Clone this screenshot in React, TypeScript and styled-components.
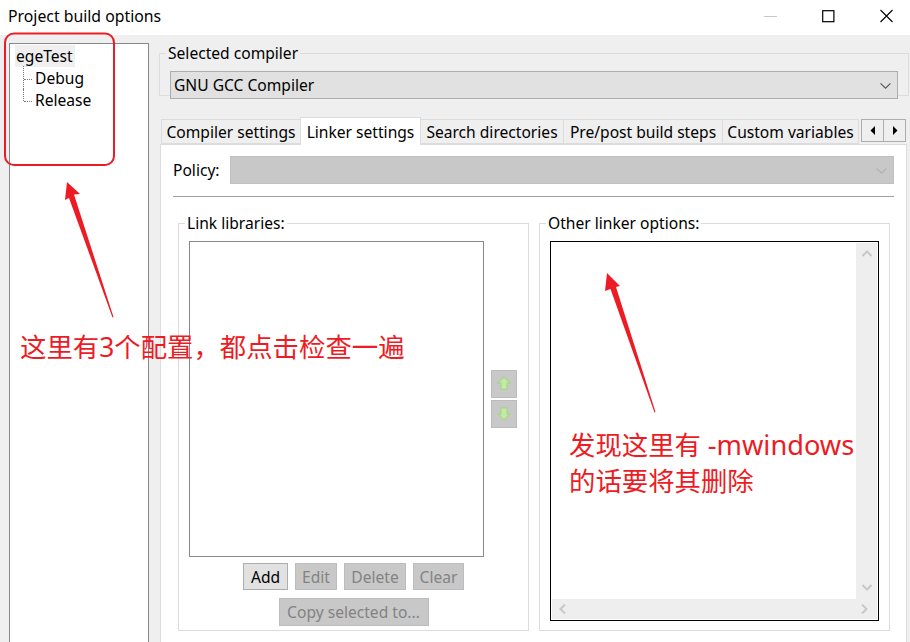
import React from 'react';
import styled, { createGlobalStyle } from 'styled-components';

const GlobalStyle = createGlobalStyle`
  html, body {
    margin: 0;
    padding: 0;
    width: 910px;
    height: 642px;
    overflow: hidden;
    background: #efefef;
    color: #000;
    font-family: "Noto Sans", "Open Sans", sans-serif;
    font-size: 15.6px;
  }
  * { box-sizing: border-box; }
`;

const Page = styled.div`
  position: relative;
  width: 910px;
  height: 642px;
  overflow: hidden;
  display: flex;
  flex-direction: column;
`;

const TitleBar = styled.div`
  height: 35px;
  flex: none;
  background: #fff;
  display: flex;
  align-items: center;
  justify-content: space-between;
  padding: 0 17px 3px 8px;
`;

const Title = styled.div`
  font-size: 15.8px;
`;

const WindowButtons = styled.div`
  display: flex;
  align-items: center;
  gap: 45px;
  height: 14px;

  svg { display: block; }
`;

const Body = styled.div`
  flex: 1;
  min-height: 0;
  display: flex;
  gap: 10px;
  padding: 8px 1px 0 9px;
  background: #efefef;
`;

const TreePanel = styled.div`
  width: 140px;
  height: 620px;
  flex: none;
  background: #fff;
  border: 1px solid #85888f;
  padding: 1px 0 0 5px;
`;

const TreeRoot = styled.div`
  width: fit-content;
  height: 22px;
  line-height: 23px;
  padding: 0 2px 0 1px;
  background: #efefef;
`;

const TreeChild = styled.div<{ $last?: boolean }>`
  position: relative;
  height: 22px;
  line-height: 22px;
  padding-left: 20px;

  &::before {
    content: '';
    position: absolute;
    left: 8px;
    top: ${({ $last }) => ($last ? '0' : '-1px')};
    height: ${({ $last }) => ($last ? '12px' : '23px')};
    border-left: 1px dotted #777;
  }

  &::after {
    content: '';
    position: absolute;
    left: 9px;
    top: 12px;
    width: 8px;
    border-top: 1px dotted #777;
  }
`;

const RightColumn = styled.div`
  flex: 1;
  min-width: 0;
  display: flex;
  flex-direction: column;
`;

const Group = styled.fieldset`
  margin: 0;
  padding: 0;
  min-width: 0;
  border: 1px solid #dcdcdc;
`;

const Legend = styled.legend`
  margin-left: -4px;
  padding: 0 2px;
  line-height: 20px;
  height: 20px;
`;

const CompilerGroup = styled(Group)`
  height: 53px;
  padding: 8px 10px 0 10px;
`;

const Combo = styled.div<{ $disabled?: boolean }>`
  height: 28px;
  display: flex;
  align-items: center;
  justify-content: space-between;
  padding: 0 6px 0 3px;
  background: ${({ $disabled }) => ($disabled ? '#c8c8c8' : '#e1e1e1')};
  border: 1px solid ${({ $disabled }) => ($disabled ? '#c0c0c0' : '#adadad')};
  flex: 1;
  min-width: 0;
`;

const TabsRow = styled.div`
  height: 46px;
  flex: none;
  display: flex;
  align-items: flex-end;
  padding-left: 2px;
  margin-top: 2px;
  position: relative;
`;

const Tab = styled.div<{ $active?: boolean; $w: number }>`
  width: ${({ $w }) => $w}px;
  height: ${({ $active }) => ($active ? '28px' : '25px')};
  flex: none;
  display: flex;
  align-items: center;
  justify-content: center;
  background: ${({ $active }) => ($active ? '#fff' : '#efefef')};
  border: 1px solid #dcdcdc;
  border-bottom: ${({ $active }) => ($active ? 'none' : '1px solid #dcdcdc')};
  margin-right: -1px;
  position: relative;
  z-index: ${({ $active }) => ($active ? 1 : 0)};
  margin-bottom: ${({ $active }) => ($active ? '-1px' : '0')};
`;

const TabScroller = styled.div`
  display: flex;
  margin-left: 3px;
  margin-bottom: 2px;
`;

const TabArrow = styled.div`
  width: 23px;
  height: 23px;
  display: flex;
  align-items: center;
  justify-content: center;
  background: #efefef;
  border: 1px solid #adadad;
  margin-right: -1px;

  svg { display: block; }
`;

const TabPanel = styled.div`
  width: 747px;
  height: 510px;
  flex: none;
  margin-left: 1px;
  background: #fff;
  border: 1px solid #dcdcdc;
  padding: 11px 12px 0 12px;
`;

const PolicyRow = styled.div`
  display: flex;
  align-items: center;
  gap: 10px;
  padding-bottom: 12px;
  border-bottom: 1px solid #a0a0a0;
`;

const Lists = styled.div`
  display: flex;
  gap: 10px;
  margin: 16px 0 0 5px;
`;

const ListGroup = styled(Group)`
  width: 351px;
  height: 418px;
  padding: 8px 10px 0;
  background: #fff;
`;

const LibRow = styled.div`
  display: flex;
  gap: 7px;
  align-items: center;
`;

const ListBox = styled.div`
  width: 295px;
  height: 316px;
  background: #fff;
  border: 1px solid #85888f;
`;

const MoveButtons = styled.div`
  display: flex;
  flex-direction: column;
  gap: 2px;
`;

const MoveButton = styled.div`
  width: 26px;
  height: 28px;
  display: flex;
  align-items: center;
  justify-content: center;
  background: #c8c8c8;
  border: 1px solid #bcbcbc;

  svg { display: block; filter: blur(0.5px); }
`;

const ButtonRow = styled.div`
  display: flex;
  justify-content: center;
  gap: 7px;
  margin-top: 6px;
`;

const CopyRow = styled(ButtonRow)`
  margin-top: 8px;
`;

const Button = styled.div<{ $disabled?: boolean; $w: number; $h?: number }>`
  width: ${({ $w }) => $w}px;
  height: ${({ $h }) => $h ?? 27}px;
  display: flex;
  align-items: center;
  justify-content: center;
  background: ${({ $disabled }) => ($disabled ? '#c8c8c8' : '#e1e1e1')};
  color: ${({ $disabled }) => ($disabled ? '#838383' : '#000')};
  border: 1px solid ${({ $disabled }) => ($disabled ? '#bcbcbc' : '#adadad')};
`;

const OptionsBox = styled.div`
  width: 329px;
  height: 380px;
  background: #fff;
  border: 1px solid #000;
  padding: 1px;
  display: grid;
  grid-template-columns: 1fr 21px;
  grid-template-rows: 1fr 20px;
`;

const ScrollTrack = styled.div<{ $vertical?: boolean }>`
  background: #eeeeee;
  display: flex;
  flex-direction: ${({ $vertical }) => ($vertical ? 'column' : 'row')};
  align-items: center;
  justify-content: space-between;
  padding: ${({ $vertical }) => ($vertical ? '6px 0 7px' : '0 8px 0 6px')};
  grid-column: ${({ $vertical }) => ($vertical ? '2' : '1 / 3')};
  grid-row: ${({ $vertical }) => ($vertical ? '1' : '2')};

  svg { display: block; }
`;

const Overlay = styled.svg`
  position: absolute;
  left: 0;
  top: 0;
  pointer-events: none;
`;

const Callout = styled.div<{ $x: number; $y: number }>`
  position: absolute;
  left: ${({ $x }) => $x}px;
  top: ${({ $y }) => $y}px;
  color: #ed1c24;
  font-family: "Noto Sans", "Noto Sans CJK SC", sans-serif;
  font-size: 26.4px;
  line-height: 36px;
  white-space: nowrap;
`;

const CalloutLatin = styled.span`
  font-size: 27.2px;
`;

const Chevron = ({ dir, color, size = 10, weight = 1 }: { dir: 'up' | 'down' | 'left' | 'right'; color: string; size?: number; weight?: number }) => {
  const rot = { up: 180, down: 0, left: 90, right: -90 }[dir];
  return (
    <svg width={size} height={size} viewBox="0 0 10 10">
      <path d="M0.5 3 L5 7.5 L9.5 3" fill="none" stroke={color} strokeWidth={weight} transform={`rotate(${rot} 5 5)`} />
    </svg>
  );
};

const MoveArrow = ({ down }: { down?: boolean }) => (
  <svg width="14" height="16" viewBox="0 0 16 18">
    <path
      d="M8 1 L15 8 L11.5 8 L11.5 15 L4.5 15 L4.5 8 L1 8 Z"
      fill="#c4e8a6"
      stroke="#a9d58d"
      strokeWidth="1.5"
      transform={down ? 'rotate(180 8 8.5)' : undefined}
    />
  </svg>
);

const App: React.FC = () => {
  return (
    <Page>
      <GlobalStyle />
      <TitleBar>
        <Title>Project build options</Title>
        <WindowButtons>
          <svg width="13" height="14" viewBox="0 0 13 14">
            <path d="M0 7.5 H13" stroke="#c8c8c8" strokeWidth="1" />
          </svg>
          <svg width="13" height="14" viewBox="0 0 13 14">
            <rect x="0.7" y="1.7" width="11.2" height="11" fill="none" stroke="#000" strokeWidth="1.2" />
          </svg>
          <svg width="13" height="14" viewBox="0 0 13 14">
            <path d="M0.5 1 L12.5 13 M12.5 1 L0.5 13" stroke="#000" strokeWidth="1.1" />
          </svg>
        </WindowButtons>
      </TitleBar>
      <Body>
        <TreePanel>
          <TreeRoot>egeTest</TreeRoot>
          <TreeChild>Debug</TreeChild>
          <TreeChild $last>Release</TreeChild>
        </TreePanel>
        <RightColumn>
          <CompilerGroup>
            <Legend>Selected compiler</Legend>
            <Combo>
              GNU GCC Compiler
              <Chevron dir="down" color="#555" size={11} />
            </Combo>
          </CompilerGroup>
          <TabsRow>
            <Tab $w={140}>Compiler settings</Tab>
            <Tab $active $w={121}>Linker settings</Tab>
            <Tab $w={144}>Search directories</Tab>
            <Tab $w={160}>Pre/post build steps</Tab>
            <Tab $w={137}>Custom variables</Tab>
            <TabScroller>
              <TabArrow>
                <svg width="6" height="9" viewBox="0 0 6 9"><path d="M5 0 V9 L0.5 4.5 Z" fill="#000" /></svg>
              </TabArrow>
              <TabArrow>
                <svg width="6" height="9" viewBox="0 0 6 9"><path d="M1 0 V9 L5.5 4.5 Z" fill="#000" /></svg>
              </TabArrow>
            </TabScroller>
          </TabsRow>
          <TabPanel>
            <PolicyRow>
              Policy:
              <Combo $disabled>
                <span />
                <Chevron dir="down" color="#b0b0b0" size={11} />
              </Combo>
            </PolicyRow>
            <Lists>
              <ListGroup>
                <Legend>Link libraries:</Legend>
                <LibRow>
                  <ListBox />
                  <MoveButtons>
                    <MoveButton><MoveArrow /></MoveButton>
                    <MoveButton><MoveArrow down /></MoveButton>
                  </MoveButtons>
                </LibRow>
                <ButtonRow>
                  <Button $w={45}>Add</Button>
                  <Button $disabled $w={42}>Edit</Button>
                  <Button $disabled $w={62}>Delete</Button>
                  <Button $disabled $w={51}>Clear</Button>
                </ButtonRow>
                <CopyRow>
                  <Button $disabled $w={150} $h={28}>Copy selected to...</Button>
                </CopyRow>
              </ListGroup>
              <ListGroup>
                <Legend>Other linker options:</Legend>
                <OptionsBox>
                  <div />
                  <ScrollTrack $vertical>
                    <Chevron dir="up" color="#c8c8c8" weight={2} />
                    <Chevron dir="down" color="#c8c8c8" weight={2} />
                  </ScrollTrack>
                  <ScrollTrack>
                    <Chevron dir="left" color="#c8c8c8" weight={2} />
                    <Chevron dir="right" color="#c8c8c8" weight={2} />
                  </ScrollTrack>
                </OptionsBox>
              </ListGroup>
            </Lists>
          </TabPanel>
        </RightColumn>
      </Body>
      <Overlay width="910" height="642" viewBox="0 0 910 642">
        <rect x="5" y="33.5" width="109" height="131.5" rx="9" fill="none" stroke="#ed1c24" strokeWidth="2" />
        <polygon points="67,182 80,194 74,194.5 113.5,317 112.5,317.5 69,198 65,200" fill="#ed1c24" />
        <polygon points="607,273 620,286 616,287 655.5,412 654.5,412.5 610.5,289 605,291" fill="#ed1c24" />
      </Overlay>
      <Callout $x={20} $y={329}>这里有3个配置，都点击检查一遍</Callout>
      <Callout $x={569} $y={427}>发现这里有 <CalloutLatin>-mwindows</CalloutLatin></Callout>
      <Callout $x={569} $y={463}>的话要将其删除</Callout>
    </Page>
  );
};

export default App;
